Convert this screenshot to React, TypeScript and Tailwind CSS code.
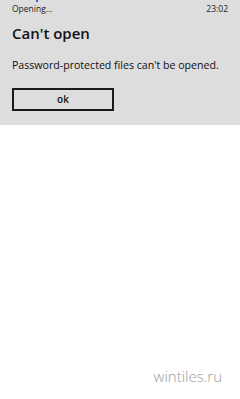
export default function App() {
  return (
    <div className="relative w-[240px] h-[399px] bg-white overflow-hidden" style={{ fontFamily: '"Open Sans", "Noto Sans", sans-serif' }}>
      <div className="bg-[#dddddd] h-[125px] px-3 relative">
        <div className="absolute left-[36px] top-0 w-[2px] h-[2px] bg-[#4a5bd0]" />
        <div className="flex justify-between items-center h-[16px] text-[8.5px] text-[#222] pt-[2px]">
          <span>Opening...</span>
          <span className="pr-[0px]">23:02</span>
        </div>
        <h1 className="text-[15px] font-semibold text-[#111] mt-[7px] leading-[20px]">Can't open</h1>
        <p className="text-[10.6px] text-[#111] mt-[15px] leading-[14px]">Password-protected files can't be opened.</p>
        <button className="mt-[16px] w-[102px] h-[23px] border-2 border-[#1a1a1a] text-[10px] font-semibold text-[#111] flex items-center justify-center">ok</button>
      </div>
      <div className="absolute right-[18px] bottom-[12px] text-[15px] font-light text-[#9c9c9c]">wintiles.ru</div>
    </div>
  );
}
